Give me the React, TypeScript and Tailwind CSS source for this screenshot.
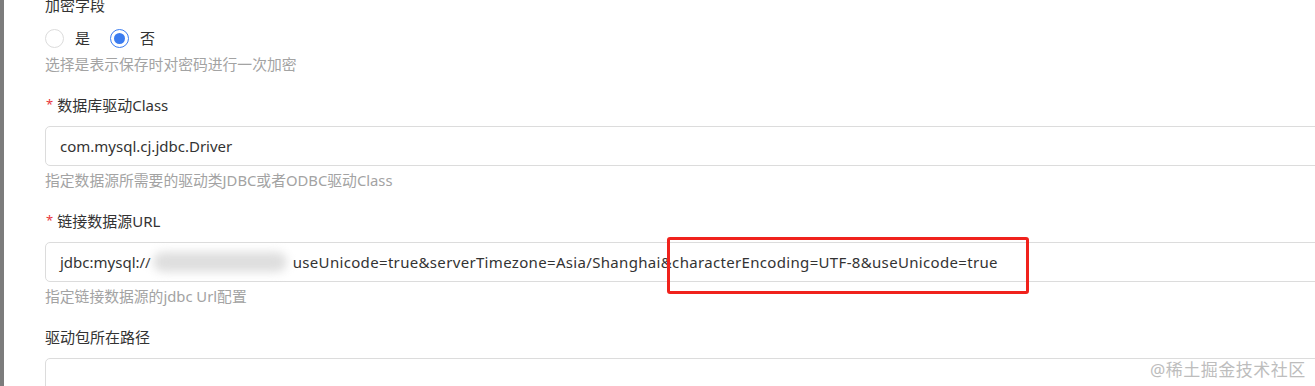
import React from "react";

const font = { fontFamily: '"Noto Sans", "Noto Sans CJK SC", sans-serif' };

function Label({ text, required }: { text: string; required?: boolean }) {
  return (
    <div className="flex items-center h-[22px] mb-[10px] text-[15px] text-[#333333]">
      {required && <span className="text-[#e8363c] text-[13px] mr-[4px] ml-[1px]">*</span>}
      <span>{text}</span>
    </div>
  );
}

function Helper({ text }: { text: string }) {
  return <div className="mt-1 h-5 leading-5 text-[14.8px] text-[#a3a3a3]">{text}</div>;
}

function Input({ children }: { children?: React.ReactNode }) {
  return (
    <div className="h-10 w-[1300px] border border-[#dcdcdc] rounded-[5px] bg-white flex items-center pl-[14px] text-[15px] text-[#333333] whitespace-nowrap">
      {children}
    </div>
  );
}

export default function App() {
  return (
    <div className="w-[1315px] h-[386px] overflow-hidden bg-white flex relative" style={font}>
      <div className="w-[4px] h-full bg-[#7c7c7c] shrink-0" />
      <div className="pl-[41px] -mt-[6px] flex flex-col">
        {/* item 1 */}
        <div>
          <Label text="加密字段" />
          <div className="flex items-center h-6 text-[15px] text-[#333333]">
            <span className="w-[19px] h-[19px] rounded-full border border-[#dcdcdc] bg-white" />
            <span className="ml-[11px]">是</span>
            <span className="ml-[20px] w-[19px] h-[19px] rounded-full border border-[#3b7cf0] flex items-center justify-center">
              <span className="w-[11px] h-[11px] rounded-full bg-[#3b7cf0]" />
            </span>
            <span className="ml-[11px]">否</span>
          </div>
          <Helper text="选择是表示保存时对密码进行一次加密" />
        </div>
        {/* item 2 */}
        <div className="mt-5">
          <Label text="数据库驱动Class" required />
          <Input>com.mysql.cj.jdbc.Driver</Input>
          <Helper text="指定数据源所需要的驱动类JDBC或者ODBC驱动Class" />
        </div>
        {/* item 3 */}
        <div className="mt-5 relative">
          <Label text="链接数据源URL" required />
          <Input>
            <span>jdbc:mysql://</span>
            <span className="inline-block w-[142px] h-[26px] relative">
              <span className="absolute left-[2px] top-[3px] w-[134px] h-[20px] rounded-full bg-[#dedede] blur-[5px]" />
            </span>
            <span className="tracking-[0.33px]">useUnicode=true&amp;serverTimezone=Asia/Shanghai&amp;characterEncoding=UTF-8&amp;useUnicode=true</span>
          </Input>
          <Helper text="指定链接数据源的jdbc Url配置" />
        </div>
        {/* item 4 */}
        <div className="mt-5">
          <Label text="驱动包所在路径" />
          <Input />
        </div>
      </div>
      {/* annotation box */}
      <div className="absolute left-[667px] top-[237px] w-[362px] h-[57px] border-[3px] border-[#f0221c] rounded-[3px]" />
      {/* watermark */}
      <div className="absolute left-[1150px] top-[357px] text-[17px] text-[#bdbdbd] tracking-[0.5px]">@稀土掘金技术社区</div>
    </div>
  );
}
